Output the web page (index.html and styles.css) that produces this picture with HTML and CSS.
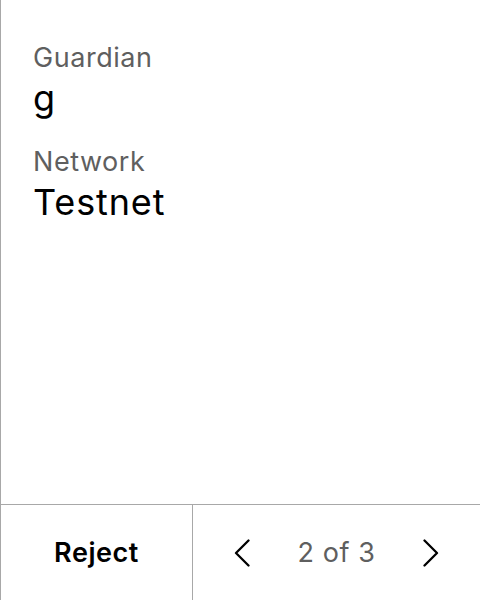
FILE: index.html
```html
<!DOCTYPE html>
<html>
<head>
<meta charset="utf-8">
<link rel="stylesheet" href="styles.css">
</head>
<body>
<div class="screen">
  <div class="content">
    <div class="field">
      <div class="label">Guardian</div>
      <div class="value">g</div>
    </div>
    <div class="field">
      <div class="label">Network</div>
      <div class="value">Testnet</div>
    </div>
  </div>
  <div class="footer">
    <div class="reject">Reject</div>
    <div class="pager">
      <svg class="chev" width="16" height="28" viewBox="0 0 16 28"><path d="M14.5 1.5 L2 14 L14.5 26.5" fill="none" stroke="#000" stroke-width="2.3" stroke-linecap="round" stroke-linejoin="round"/></svg>
      <span class="count">2 of 3</span>
      <svg class="chev" width="16" height="28" viewBox="0 0 16 28"><path d="M1.5 1.5 L14 14 L1.5 26.5" fill="none" stroke="#000" stroke-width="2.3" stroke-linecap="round" stroke-linejoin="round"/></svg>
    </div>
  </div>
</div>
</body>
</html>
```
FILE: styles.css
```css
html, body { margin: 0; padding: 0; background: #fff; }
body { font-family: Inter, "Noto Sans", sans-serif; }
.screen {
  width: 480px; height: 600px; box-sizing: border-box;
  border-left: 1px solid #a8a8a8;
  display: flex; flex-direction: column;
}
.content { flex: 1; padding: 40px 0 0 32px; }
.field { margin-bottom: 24px; }
.label { font-size: 27px; line-height: 36px; color: #5f5f5f; letter-spacing: 0.02em; }
.value { font-size: 36px; line-height: 44px; color: #000; letter-spacing: 0.024em; }
.footer {
  height: 96px; box-sizing: border-box; border-top: 1px solid #a8a8a8;
  display: flex;
}
.reject {
  width: 191px; border-right: 1px solid #a8a8a8;
  display: flex; align-items: center; justify-content: center;
  font-size: 27px; font-weight: 600; color: #000; letter-spacing: 0.02em;
}
.pager {
  flex: 1; display: flex; align-items: center; justify-content: center; gap: 48px;
}
.count { font-size: 27px; color: #5f5f5f; letter-spacing: 0.02em; }
.chev { display: block; }
```
